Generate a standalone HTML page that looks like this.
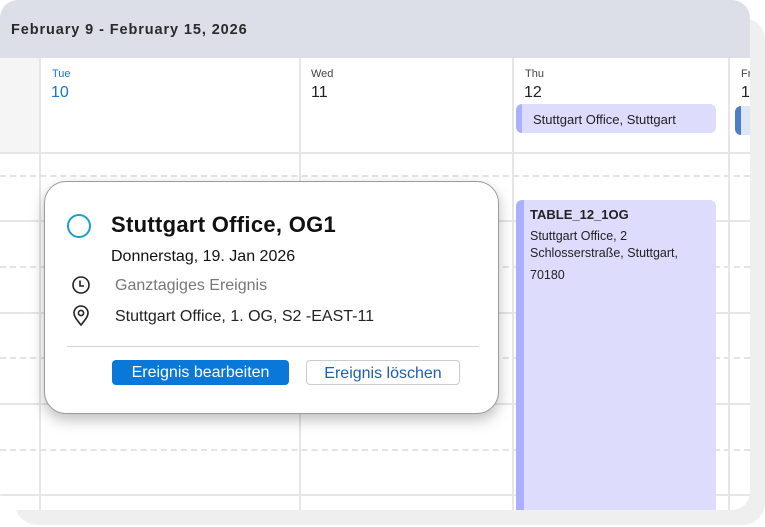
<!DOCTYPE html>
<html><head><style>
*{margin:0;padding:0;box-sizing:border-box}
body{width:765px;height:527px;background:#fff;position:relative;overflow:hidden;font-family:"Liberation Sans",sans-serif}
.abs{position:absolute}
.back{left:15px;top:18px;width:750px;height:507px;background:#efefef;border-radius:22px}
.main{left:0;top:0;width:750px;height:510px;background:#fff;border-radius:18px;overflow:hidden}
.hdr{left:0;top:0;width:750px;height:58px;background:#dcdfe7}
.hdr span{position:absolute;left:11px;top:22px;font-weight:bold;font-size:14.5px;letter-spacing:0.9px;color:#2a2a2a}
.vl{position:absolute;top:58px;bottom:0;width:2px;background:#e6e6e6}
.hl{position:absolute;left:0;right:0;height:2px;background:#e6e6e6}
.dl{position:absolute;left:0;right:0;height:0;border-top:2px dashed #e3e3e3}
.dn{position:absolute;font-size:11px;color:#444}
.dd{position:absolute;font-size:16px;color:#222}
</style></head><body>
<div class="abs back"></div>
<div class="abs main">
 <div class="abs hdr"><span>February 9 - February 15, 2026</span></div>
 <div class="abs" style="left:0;top:58px;width:40px;height:94px;background:#f5f5f5"></div>
 <div class="hl" style="top:152px"></div>
 <div class="dl" style="top:175px"></div>
 <div class="hl" style="top:220px"></div>
 <div class="dl" style="top:266px"></div>
 <div class="hl" style="top:312px"></div>
 <div class="dl" style="top:357px"></div>
 <div class="hl" style="top:403px"></div>
 <div class="dl" style="top:449px"></div>
 <div class="hl" style="top:494px"></div>
 <div class="vl" style="left:39px"></div>
 <div class="vl" style="left:299px"></div>
 <div class="vl" style="left:512px"></div>
 <div class="vl" style="left:728px"></div>
 <div class="dn" style="left:52px;top:68px;color:#1a73d0">Tue</div>
 <div class="dd" style="left:51px;top:84px;color:#1a73d0">10</div>
 <div class="dn" style="left:311px;top:68px">Wed</div>
 <div class="dd" style="left:311px;top:84px">11</div>
 <div class="dn" style="left:525px;top:68px">Thu</div>
 <div class="dd" style="left:524px;top:84px">12</div>
 <div class="dn" style="left:741px;top:68px">Fr</div>
 <div class="dd" style="left:741px;top:84px">1</div>
 <div class="abs" style="left:516px;top:104px;width:200px;height:29px;background:#dddcfc;border-radius:6px;border-left:6px solid #aab0ff;font-size:13px;color:#222;padding:8px 0 0 11px">Stuttgart Office, Stuttgart</div>
 <div class="abs" style="left:735px;top:106px;width:20px;height:29px;background:#dce6f5;border-radius:6px;border-left:6px solid #4a7ec6"></div>
 <div class="abs" style="left:516px;top:200px;width:200px;height:320px;background:#dddcfc;border-radius:6px 6px 0 0;border-left:8px solid #aab0ff;padding:7px 0 0 6px;color:#222">
  <div style="font-weight:bold;font-size:13px">TABLE_12_1OG</div>
  <div style="font-size:12.5px;line-height:17px;margin-top:6px">Stuttgart Office, 2<br>Schlosserstraße, Stuttgart,</div>
  <div style="font-size:12.5px;margin-top:6px">70180</div>
 </div>
</div>
<div class="abs" style="left:44px;top:181px;width:455px;height:233px;background:#fff;border:1px solid #9a9a9a;border-radius:22px;box-shadow:0 6px 14px rgba(0,0,0,.25)">
 <div class="abs" style="left:22px;top:32px;width:24px;height:24px;border:2px solid #1aa0c8;border-radius:50%"></div>
 <div class="abs" style="left:66px;top:30px;font-size:22px;font-weight:bold;color:#111;letter-spacing:0.3px">Stuttgart Office, OG1</div>
 <div class="abs" style="left:66px;top:66px;font-size:16px;color:#111">Donnerstag, 19. Jan 2026</div>
 <svg class="abs" style="left:26px;top:93px" width="20" height="20" viewBox="0 0 20 20"><circle cx="10" cy="10" r="8" fill="none" stroke="#222" stroke-width="1.6"/><path d="M9 5.5V11H13" fill="none" stroke="#222" stroke-width="1.6"/></svg>
 <div class="abs" style="left:70px;top:95px;font-size:16px;color:#777">Ganztagiges Ereignis</div>
 <svg class="abs" style="left:27px;top:123px" width="18" height="22" viewBox="0 0 18 22"><path d="M9 20C5 15 2 11.5 2 8A7 7 0 0 1 16 8C16 11.5 13 15 9 20Z" fill="none" stroke="#222" stroke-width="1.6"/><circle cx="9" cy="8" r="2.6" fill="none" stroke="#222" stroke-width="1.6"/></svg>
 <div class="abs" style="left:70px;top:126px;font-size:16px;color:#222">Stuttgart Office, 1. OG, S2 -EAST-11</div>
 <div class="abs" style="left:22px;top:164px;width:412px;height:1px;background:#d4d4d4"></div>
 <div class="abs" style="left:67px;top:178px;width:177px;height:25px;background:#0a78d8;border-radius:4px;color:#fff;font-size:16px;text-align:center;line-height:25px">Ereignis bearbeiten</div>
 <div class="abs" style="left:261px;top:178px;width:154px;height:25px;border:1px solid #ccc;border-radius:4px;color:#1a5fb4;font-size:16px;text-align:center;line-height:25px">Ereignis löschen</div>
</div>
</body></html>
